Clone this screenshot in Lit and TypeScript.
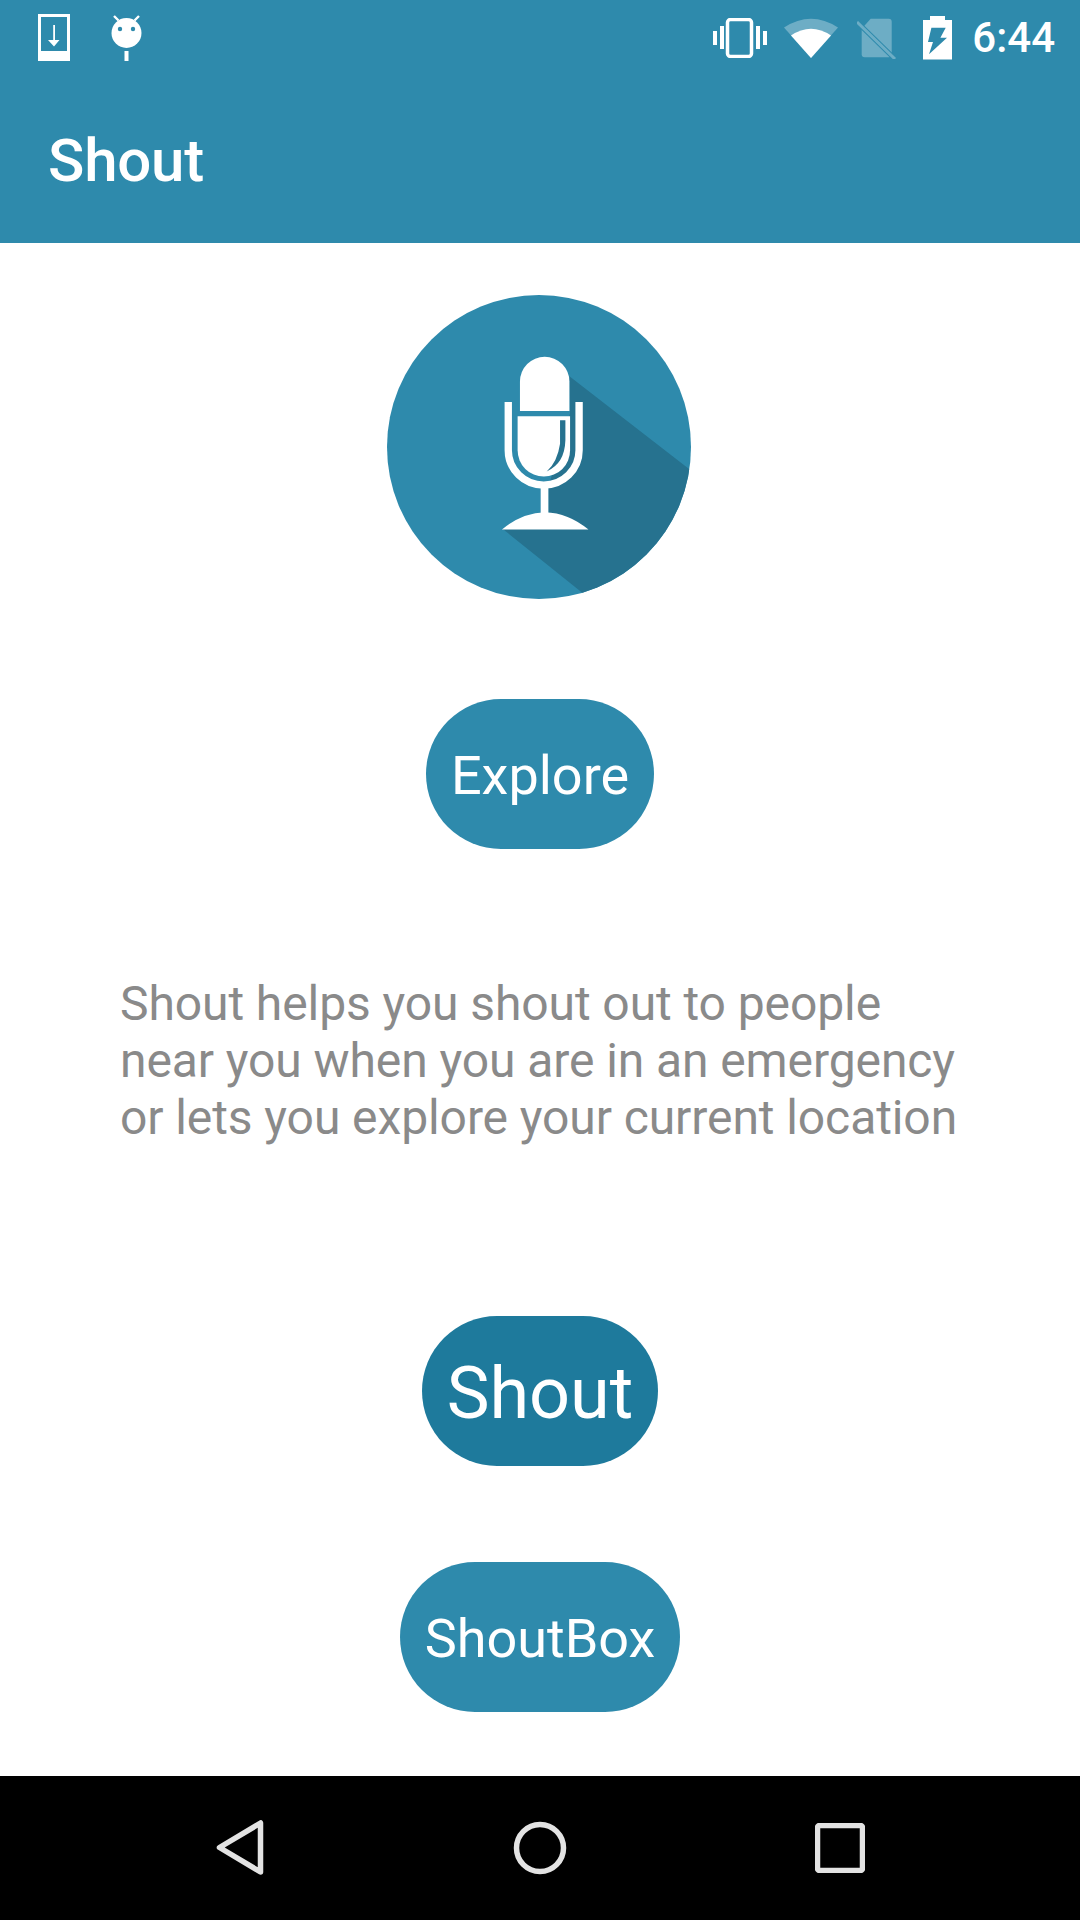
import { LitElement, html, css, svg } from "lit";
import { customElement } from "lit/decorators.js";

const phoneIcon = svg`<svg class="i" width="32" height="47" viewBox="0 0 32 47">
  <path fill="#fff" fill-rule="evenodd" d="M0 0H32V47H0ZM3 3V37H29V3Z"/>
  <path fill="#fff" d="M15.200 11H17V26H21.500L16 32.500L10 26H15.200Z"/>
</svg>`;

const droidIcon = svg`<svg class="i" width="32" height="47" viewBox="0 0 32 47">
  <circle cx="15.500" cy="19" r="15" fill="#fff"/>
  <circle cx="9" cy="15" r="2.200" fill="#2e8aac"/>
  <circle cx="22" cy="15" r="2.200" fill="#2e8aac"/>
  <path stroke="#fff" stroke-width="2.400" d="M3 2L7.500 6.500M28 2L23.500 6.500"/>
  <rect x="13.500" y="37" width="4" height="10" fill="#fff"/>
</svg>`;

const vibrateIcon = svg`<svg class="i" width="54" height="40" viewBox="0 0 54 40">
  <rect x="14.500" y="1.500" width="24" height="37" rx="3" fill="none" stroke="#fff" stroke-width="3.500"/>
  <path fill="#fff" d="M0 13H4V27H0ZM7 8H11V31H7ZM43 8H47V31H43ZM50 13H54V27H50Z"/>
</svg>`;

const wifiIcon = svg`<svg class="i" width="54" height="42" viewBox="0 0 54 42">
  <path fill="#fff" opacity=".3" d="M0 10.500Q27 -7 54 10.500L27 41Z"/>
  <path fill="#fff" d="M7 18.500Q27 5 47 18.500L27 41Z"/>
</svg>`;

const simIcon = svg`<svg class="i" width="40" height="42" viewBox="0 0 40 42">
  <defs><mask id="simcut" maskUnits="userSpaceOnUse" x="0" y="0" width="40" height="42">
    <rect width="40" height="42" fill="#fff"/>
    <path stroke="#000" stroke-width="5" d="M0 5L38 42"/>
  </mask></defs>
  <g opacity=".3">
    <path fill="#fff" mask="url(#simcut)" d="M13.700 1.800H31.700Q34.700 1.800 34.700 4.800V37.200Q34.700 40.200 31.700 40.200H7.700Q4.700 40.200 4.700 37.200V11.800Z"/>
    <path stroke="#fff" stroke-width="3" d="M0 5L38 42"/>
  </g>
</svg>`;

const batteryIcon = svg`<svg class="i" width="29" height="44" viewBox="0 0 29 44">
  <path fill="#fff" fill-rule="evenodd" d="M7 0H22V4H29V43.500H0V4H7ZM8.400 11.700L5 26H10L6 38.300L24 21.700H17.400L22.700 11.700Z"/>
</svg>`;

const micLogo = svg`<svg class="logo" width="304" height="304" viewBox="52 45 910 910">
  <defs><clipPath id="disc"><circle cx="507" cy="500" r="455"/></clipPath></defs>
  <circle cx="507" cy="500" r="455" fill="#2e8aac"/>
  <path clip-path="url(#disc)" fill="#26728f" d="M598 288L1000 600V1000H716L398 745H535V620L600 400Z"/>
  <path fill="#fff" d="M450 392V304a74 74 0 0 1 148 0V392Z"/>
  <path fill="#fff" d="M443 408H600V510a78.500 78.500 0 0 1-157 0Z"/>
  <path fill="#26728f" d="M570 420H586V480Q584 550 530 573Q562 545 570 490Z"/>
  <path fill="none" stroke="#fff" stroke-width="22" d="M415 365V510a106 104 0 0 0 212 0V365"/>
  <rect x="512" y="620" width="23" height="80" fill="#fff"/>
  <path fill="#fff" d="M396 747Q455 697 525 695Q595 697 655 747Z"/>
</svg>`;

const backIcon = svg`<svg width="52" height="58" viewBox="0 0 52 58">
  <path fill="none" stroke="#e3e3e3" stroke-width="5.500" stroke-linejoin="round" d="M5.500 28.500L46.500 4V53Z"/>
</svg>`;
const homeIcon = svg`<svg width="54" height="54" viewBox="0 0 54 54">
  <circle cx="27" cy="27" r="23.500" fill="none" stroke="#e3e3e3" stroke-width="5.500"/>
</svg>`;
const recentIcon = svg`<svg width="50" height="50" viewBox="0 0 50 50">
  <rect x="2.500" y="2.500" width="45" height="45" rx="2" fill="none" stroke="#e3e3e3" stroke-width="5.500"/>
</svg>`;

@customElement("app-root")
export class AppRoot extends LitElement {
  static styles = css`
    :host {
      display: flex;
      flex-direction: column;
      width: 1080px;
      height: 1920px;
      background: #fff;
      font-family: Roboto, "Liberation Sans", sans-serif;
      overflow: hidden;
    }
    .appbar {
      background: #2e8aac;
      height: 243px;
      flex: none;
      color: #fff;
    }
    .status {
      height: 75px;
      display: flex;
      align-items: center;
      padding: 0 25px 0 38px;
      box-sizing: border-box;
    }
    .status .i { display: block; flex: none; }
    .left { display: flex; gap: 41px; }
    .right { margin-left: auto; display: flex; align-items: center; }
    .time { font-size: 42px; font-weight: 500; line-height: 48px; margin-left: 20px; }
    .r-vib { margin-right: 17px; }
    .r-wifi { margin-right: 19px; }
    .r-sim { margin-right: 26px; }
    .title {
      font-size: 60px;
      font-weight: 500;
      line-height: 70px;
      padding: 51px 0 0 48px;
      letter-spacing: -0.2px;
    }
    main {
      flex: 1;
      display: flex;
      flex-direction: column;
      align-items: center;
    }
    .logo { display: block; margin: 52px 2px 0 0; }
    .btn {
      height: 150px;
      border-radius: 75px;
      background: #2e8aac;
      color: #fff;
      display: flex;
      align-items: center;
      justify-content: center;
      font-size: 54px;
      padding: 2px 25px 0;
      box-sizing: border-box;
    }
    .explore { margin-top: 100px; padding: 2px 24.500px 0; }
    .desc {
      margin: 126px 0 0;
      align-self: stretch;
      padding: 0 110px 0 120px;
      font-size: 48px;
      line-height: 57px;
      letter-spacing: -0.09px;
      color: #8a8a8a;
    }
    .shout {
      margin-top: 170px;
      background: #1e7a9c;
      font-size: 72px;
      padding-top: 4px;
    }
    .box { margin-top: 96px; }
    nav {
      flex: none;
      height: 144px;
      background: #000;
      display: grid;
      grid-template-columns: repeat(3, 300px);
      align-items: center;
      padding: 0 90px;
      box-sizing: border-box;
    }
    nav svg { display: block; justify-self: center; }
  `;

  render() {
    return html`
      <header class="appbar">
        <div class="status">
          <div class="left">${phoneIcon}${droidIcon}</div>
          <div class="right">
            <span class="r-vib">${vibrateIcon}</span>
            <span class="r-wifi">${wifiIcon}</span>
            <span class="r-sim">${simIcon}</span>
            ${batteryIcon}
            <span class="time">6:44</span>
          </div>
        </div>
        <div class="title">Shout</div>
      </header>
      <main>
        ${micLogo}
        <div class="btn explore">Explore</div>
        <p class="desc">Shout helps you shout out to people near you when you are in an emergency or lets you explore your current location</p>
        <div class="btn shout">Shout</div>
        <div class="btn box">ShoutBox</div>
      </main>
      <nav>${backIcon}${homeIcon}${recentIcon}</nav>
    `;
  }
}
